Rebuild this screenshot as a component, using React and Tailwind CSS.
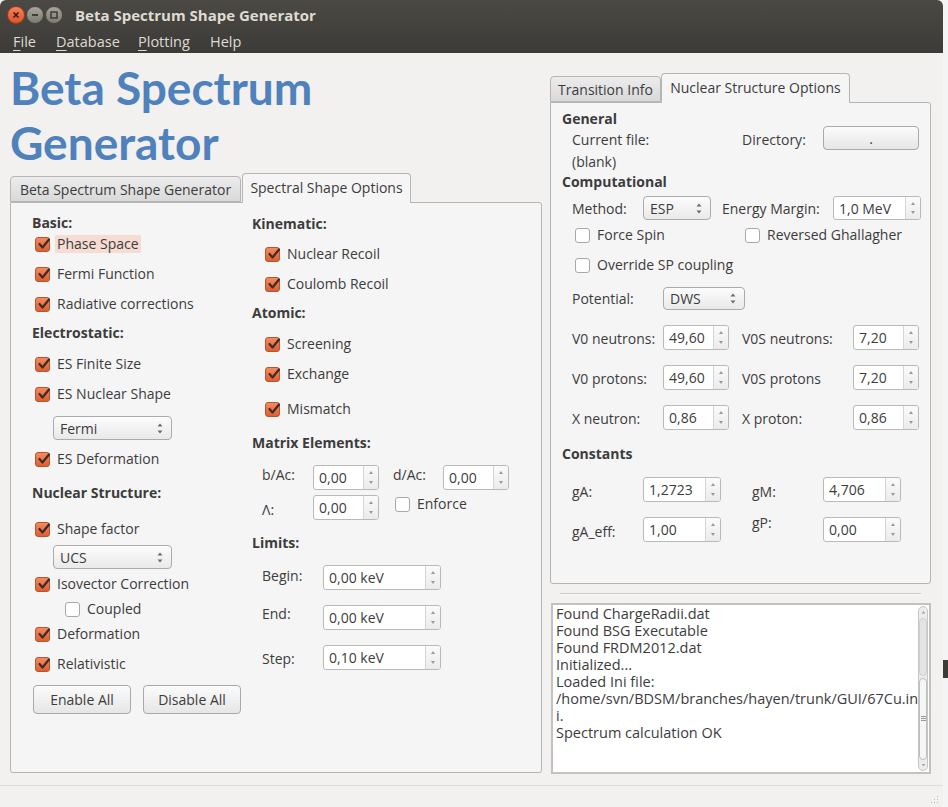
import React from 'react';

const font = { fontFamily: '"Open Sans", "DejaVu Sans", sans-serif' };

const Check = ({ on }) =>
  on ? (
    <span className="relative w-[15px] h-[15px] shrink-0 rounded-[3px] border border-[#b4552f] bg-linear-to-b from-[#f48a5f] to-[#dd5f30]">
      <svg className="absolute left-[1px] top-[-1px]" width="14" height="14" viewBox="0 0 14 14">
        <path d="M2.5 7 L5.5 10.5 L12 2.5" stroke="#3f2b24" strokeWidth="2.2" fill="none" strokeLinecap="round" strokeLinejoin="round" />
      </svg>
    </span>
  ) : (
    <span className="w-[15px] h-[15px] shrink-0 rounded-[3px] border border-[#a9a9a9] bg-white" />
  );

const Cb = ({ on = true, label, hl, className = '' }) => (
  <div className={`flex items-center h-[20px] ${className}`}>
    <Check on={on} />
    <span className={`ml-[5px] px-[2px] leading-[18px] ${hl ? 'bg-[#f6dcd2]' : ''}`}>{label}</span>
  </div>
);

const H = ({ children, className = '' }) => (
  <div className={`h-[20px] flex items-center font-bold text-[#3c3c3c] ${className}`}>{children}</div>
);

const UpDown = ({ color = '#6a6a6a', gap = 3 }) => (
  <svg width="6" height={8 + gap} viewBox={`0 0 6 ${8 + gap}`}>
    <path d="M3 0.5 L5.5 3.5 H0.5 Z" fill={color} />
    <path d={`M3 ${7.5 + gap} L5.5 ${4.5 + gap} H0.5 Z`} fill={color} />
  </svg>
);

const Spin = ({ value, w, h = 'h-[25px]' }) => (
  <div className={`flex ${w} ${h} shrink-0 rounded-[3px] border border-[#b9b9b9] bg-white overflow-hidden`}>
    <div className="flex-1 flex items-center pl-[5px]">{value}</div>
    <div className="w-[15px] border-l border-[#d6d6d6] bg-linear-to-b from-[#fbfbfb] to-[#ebebeb] flex flex-col items-center justify-between py-[5px]">
      <svg width="4" height="3" viewBox="0 0 4 3"><path d="M2 0 L4 3 H0 Z" fill="#9a9a9a" /></svg>
      <svg width="4" height="3" viewBox="0 0 4 3"><path d="M2 3 L4 0 H0 Z" fill="#9a9a9a" /></svg>
    </div>
  </div>
);

const Combo = ({ value, w, h = 'h-[24px]' }) => (
  <div className={`flex items-center justify-between ${w} ${h} shrink-0 rounded-[4px] border border-[#ababab] bg-linear-to-b from-[#fcfcfc] to-[#e9e9e9] pl-[6px] pr-[8px]`}>
    <span>{value}</span>
    <UpDown />
  </div>
);

const Btn = ({ children, w, h }) => (
  <div className={`flex items-center justify-center ${w} ${h} shrink-0 rounded-[4px] border border-[#a9a9a9] bg-linear-to-b from-[#fbfbfb] to-[#e6e6e6]`}>
    {children}
  </div>
);

const WinBtn = ({ kind }) => (
  <span
    className={`w-[18px] h-[18px] rounded-full flex items-center justify-center border ${
      kind === 'close'
        ? 'bg-linear-to-b from-[#f5815a] to-[#e0512a] border-[#9c3a1c]'
        : 'bg-linear-to-b from-[#a8a59d] to-[#7d7a73] border-[#4a4843]'
    }`}
  >
    <svg width="10" height="10" viewBox="0 0 10 10">
      {kind === 'close' && <path d="M2.5 2.5 L7.5 7.5 M7.5 2.5 L2.5 7.5" stroke="#3a1a10" strokeWidth="1.6" />}
      {kind === 'min' && <path d="M2 5 H8" stroke="#38362f" strokeWidth="1.8" />}
      {kind === 'max' && <rect x="2" y="2" width="6" height="6" stroke="#38362f" strokeWidth="1.4" fill="none" />}
    </svg>
  </span>
);

const Menu = ({ u, rest }) => (
  <span>
    <span className={u ? 'underline underline-offset-[3px]' : ''}>{u || ''}</span>
    {rest}
  </span>
);

export default function App() {
  return (
    <div className="flex w-[948px] h-[807px] bg-[#f3f3f3] text-[14px] text-[#3c3c3c] overflow-hidden" style={font}>
      <div className="w-[943px] h-full flex flex-col bg-[#f2f1f0]">
        {/* title bar */}
        <div className="h-[53px] bg-linear-to-b from-[#4a4944] to-[#3c3b37] rounded-t-[6px] flex flex-col text-[#dfdbd2]">
          <div className="h-[30px] flex items-center pl-[7px]">
            <div className="flex items-center gap-[1px]">
              <WinBtn kind="close" />
              <WinBtn kind="min" />
              <WinBtn kind="max" />
            </div>
            <span className="ml-[12px] font-bold text-[15px]">Beta Spectrum Shape Generator</span>
          </div>
          <div className="h-[23px] flex items-center pl-[13px] text-[14.5px]">
            <span className="w-[43px]"><Menu u="F" rest="ile" /></span>
            <span className="w-[82px]"><Menu u="D" rest="atabase" /></span>
            <span className="w-[72px]"><Menu u="P" rest="lotting" /></span>
            <span>Help</span>
          </div>
        </div>

        {/* body */}
        <div className="flex h-[732px]">
          {/* left column */}
          <div className="w-[542px] pl-[10px] flex flex-col">
            <div
              className="pt-[7px] text-[46px] leading-[55px] font-bold text-[#4f81bd]"
              style={{ fontFamily: 'Lato, "DejaVu Sans", sans-serif' }}
            >
              <div>Beta Spectrum</div>
              <div>Generator</div>
            </div>
            <div className="mt-[3px] h-[29px] flex items-end">
              <div className="w-[231px] h-[26px] rounded-t-[4px] border border-[#b5b5b5] bg-linear-to-b from-[#ececec] to-[#d9d9d9] flex items-center justify-center">
                Beta Spectrum Shape Generator
              </div>
              <div className="relative z-10 -mb-px ml-px w-[169px] h-[30px] rounded-t-[4px] border border-b-0 border-[#b5b5b5] bg-[#f5f5f5] flex items-center justify-center pb-[2px]">
                Spectral Shape Options
              </div>
            </div>
            <div className="h-[571px] w-[532px] rounded-b-[3px] rounded-tr-[3px] border border-[#b5b5b5] bg-[#f5f5f5] flex pl-[21px]">
              {/* col 1 */}
              <div className="w-[220px] pt-[9px] flex flex-col">
                <H>Basic:</H>
                <div className="ml-[3px] flex flex-col">
                  <Cb label="Phase Space" hl className="mt-[2px]" />
                  <Cb label="Fermi Function" className="mt-[10px]" />
                  <Cb label="Radiative corrections" className="mt-[10px]" />
                </div>
                <H className="mt-[8px]">Electrostatic:</H>
                <div className="ml-[3px] flex flex-col">
                  <Cb label="ES Finite Size" className="mt-[12px]" />
                  <Cb label="ES Nuclear Shape" className="mt-[10px]" />
                  <div className="mt-[12px] ml-[18px]">
                    <Combo value="Fermi" w="w-[119px]" />
                  </div>
                  <Cb label="ES Deformation" className="mt-[9px]" />
                </div>
                <H className="mt-[13px]">Nuclear Structure:</H>
                <div className="ml-[3px] flex flex-col">
                  <Cb label="Shape factor" className="mt-[17px]" />
                  <div className="mt-[6px] ml-[18px]">
                    <Combo value="UCS" w="w-[119px]" />
                  </div>
                  <Cb label="Isovector Correction" className="mt-[5px]" />
                  <Cb on={false} label="Coupled" className="mt-[5px] ml-[30px]" />
                  <Cb label="Deformation" className="mt-[5px]" />
                  <Cb label="Relativistic" className="mt-[10px]" />
                </div>
                <div className="mt-[11px] ml-[1px] flex gap-[12px]">
                  <Btn w="w-[98px]" h="h-[29px]">Enable All</Btn>
                  <Btn w="w-[98px]" h="h-[29px]">Disable All</Btn>
                </div>
              </div>

              {/* col 2 */}
              <div className="pt-[10px] flex flex-col">
                <H>Kinematic:</H>
                <div className="ml-[13px] flex flex-col">
                  <Cb label="Nuclear Recoil" className="mt-[11px]" />
                  <Cb label="Coulomb Recoil" className="mt-[10px]" />
                </div>
                <H className="mt-[8px]">Atomic:</H>
                <div className="ml-[13px] flex flex-col">
                  <Cb label="Screening" className="mt-[12px]" />
                  <Cb label="Exchange" className="mt-[10px]" />
                  <Cb label="Mismatch" className="mt-[15px]" />
                </div>
                <H className="mt-[13px]">Matrix Elements:</H>
                <div className="ml-[10px] flex flex-col">
                  <div className="mt-[13px] flex items-start">
                    <span className="w-[51px] h-[20px] leading-[20px]">b/Ac:</span>
                    <Spin value="0,00" w="w-[66px]" />
                    <span className="ml-[14px] w-[50px] h-[20px] leading-[20px]">d/Ac:</span>
                    <Spin value="0,00" w="w-[66px]" />
                  </div>
                  <div className="mt-[5px] flex items-start">
                    <span className="w-[51px] h-[20px] leading-[20px] mt-[5px]">Λ:</span>
                    <Spin value="0,00" w="w-[66px]" />
                    <Cb on={false} label="Enforce" className="ml-[16px] -mt-px" />
                  </div>
                </div>
                <H className="mt-[12px]">Limits:</H>
                <div className="ml-[10px] flex flex-col">
                  <div className="mt-[13px] flex items-start">
                    <span className="w-[61px] h-[20px] leading-[20px] mt-[1px]">Begin:</span>
                    <Spin value="0,00 keV" w="w-[118px]" />
                  </div>
                  <div className="mt-[15px] flex items-start">
                    <span className="w-[61px] h-[20px] leading-[20px] -mt-px">End:</span>
                    <Spin value="0,00 keV" w="w-[118px]" />
                  </div>
                  <div className="mt-[15px] flex items-start">
                    <span className="w-[61px] h-[20px] leading-[20px] mt-[4px]">Step:</span>
                    <Spin value="0,10 keV" w="w-[118px]" />
                  </div>
                </div>
              </div>
            </div>
          </div>

          {/* right column */}
          <div className="ml-[8px] w-[381px] pt-[20px] flex flex-col">
            <div className="h-[29px] flex items-end">
              <div className="w-[111px] h-[26px] rounded-t-[4px] border border-[#b5b5b5] bg-linear-to-b from-[#ececec] to-[#d9d9d9] flex items-center justify-center">
                Transition Info
              </div>
              <div className="relative z-10 -mb-px w-[189px] h-[30px] rounded-t-[4px] border border-b-0 border-[#b5b5b5] bg-[#f5f5f5] flex items-center justify-center pb-[2px]">
                Nuclear Structure Options
              </div>
            </div>
            <div className="h-[482px] rounded-b-[3px] rounded-tr-[3px] border border-[#b5b5b5] bg-[#f5f5f5] pl-[11px] pt-[5px] flex flex-col">
              <H>General</H>
              <div className="ml-[10px] flex flex-col">
                <div className="-mt-[2px] flex items-start">
                  <span className="w-[170px] h-[20px] leading-[20px] mt-[4px]">Current file:</span>
                  <span className="w-[81px] h-[20px] leading-[20px] mt-[4px]">Directory:</span>
                  <Btn w="w-[96px]" h="h-[24px]">.</Btn>
                </div>
                <div className="mt-[3px] h-[18px] leading-[18px]">(blank)</div>
              </div>
              <H>Computational</H>
              <div className="ml-[10px] flex flex-col">
                <div className="mt-[5px] flex items-start">
                  <span className="w-[71px] h-[20px] leading-[20px] mt-[3px]">Method:</span>
                  <Combo value="ESP" w="w-[68px]" />
                  <span className="ml-[11px] w-[111px] h-[20px] leading-[20px] mt-[3px]">Energy Margin:</span>
                  <Spin value="1,0 MeV" w="w-[88px]" h="h-[24px]" />
                </div>
                <div className="mt-[5px] flex">
                  <Cb on={false} label="Force Spin" className="ml-[3px] w-[170px]" />
                  <Cb on={false} label="Reversed Ghallagher" />
                </div>
                <Cb on={false} label="Override SP coupling" className="mt-[10px] ml-[3px]" />
                <div className="mt-[12px] flex items-start">
                  <span className="w-[91px] h-[20px] leading-[20px] mt-[2px]">Potential:</span>
                  <Combo value="DWS" w="w-[82px]" h="h-[23px]" />
                </div>
                <div className="mt-[15px] flex items-start">
                  <span className="w-[91px] h-[20px] leading-[20px] mt-[4px]">V0 neutrons:</span>
                  <Spin value="49,60" w="w-[66px]" />
                  <span className="ml-[13px] w-[111px] h-[20px] leading-[20px] mt-[4px]">V0S neutrons:</span>
                  <Spin value="7,20" w="w-[66px]" />
                </div>
                <div className="mt-[15px] flex items-start">
                  <span className="w-[91px] h-[20px] leading-[20px] mt-[4px]">V0 protons:</span>
                  <Spin value="49,60" w="w-[66px]" />
                  <span className="ml-[13px] w-[111px] h-[20px] leading-[20px] mt-[4px]">V0S protons</span>
                  <Spin value="7,20" w="w-[66px]" />
                </div>
                <div className="mt-[15px] flex items-start">
                  <span className="w-[91px] h-[20px] leading-[20px] mt-[4px]">X neutron:</span>
                  <Spin value="0,86" w="w-[66px]" />
                  <span className="ml-[13px] w-[111px] h-[20px] leading-[20px] mt-[4px]">X proton:</span>
                  <Spin value="0,86" w="w-[66px]" />
                </div>
              </div>
              <H className="mt-[13px]">Constants</H>
              <div className="ml-[10px] flex flex-col">
                <div className="mt-[14px] flex items-start">
                  <span className="w-[71px] h-[20px] leading-[20px] mt-[5px]">gA:</span>
                  <Spin value="1,2723" w="w-[78px]" />
                  <span className="ml-[31px] w-[71px] h-[20px] leading-[20px] mt-[5px]">gM:</span>
                  <Spin value="4,706" w="w-[78px]" />
                </div>
                <div className="mt-[15px] flex items-start">
                  <span className="w-[71px] h-[20px] leading-[20px] mt-[5px]">gA_eff:</span>
                  <Spin value="1,00" w="w-[78px]" />
                  <span className="ml-[31px] w-[71px] h-[20px] leading-[20px] -mt-[4px]">gP:</span>
                  <Spin value="0,00" w="w-[78px]" />
                </div>
              </div>
            </div>
            <div className="mt-[9px] ml-[10px] w-[361px] h-[2px] border-t border-[#c8c8c8] border-b border-b-[#fbfbfb]" />
            <div className="mt-[8px] ml-px w-[380px] h-[171px] border-2 border-[#c2c2c2] bg-white flex">
              <div className="flex-1 pl-[3px] text-[14.5px] leading-[17px]">
                <div>Found ChargeRadii.dat</div>
                <div>Found BSG Executable</div>
                <div>Found FRDM2012.dat</div>
                <div>Initialized...</div>
                <div>Loaded Ini file:</div>
                <div>/home/svn/BDSM/branches/hayen/trunk/GUI/67Cu.in</div>
                <div>i.</div>
                <div>Spectrum calculation OK</div>
              </div>
              <div className="w-[12px] my-[1px] mr-[1px] flex flex-col items-center rounded-full border border-[#c6c6c6] bg-[#ececec]">
                <svg className="mt-[4px] mb-[4px]" width="5" height="4" viewBox="0 0 5 4"><path d="M2.5 0 L5 4 H0 Z" fill="#999" /></svg>
                <div className="flex-1 w-full flex flex-col">
                  <div className="h-[58px] rounded-full border border-[#cfcfcf] bg-[#e4e4e4]" />
                  <div className="mt-[2px] h-[82px] rounded-full border border-[#bdbdbd] bg-[#f6f6f6] flex flex-col items-center justify-center gap-[1px]">
                    <span className="w-[5px] h-px bg-[#999]" />
                    <span className="w-[5px] h-px bg-[#999]" />
                    <span className="w-[5px] h-px bg-[#999]" />
                  </div>
                </div>
                <svg className="mt-[4px] mb-[4px]" width="5" height="4" viewBox="0 0 5 4"><path d="M2.5 4 L5 0 H0 Z" fill="#999" /></svg>
              </div>
            </div>
          </div>
        </div>

        {/* status bar */}
        <div className="flex-1 border-t border-[#dcdcdc] bg-[#f2f1f0] flex justify-end items-end pr-[4px] pb-[3px]">
          <svg width="10" height="10" viewBox="0 0 10 10">
            {[[8, 2], [8, 5], [5, 5], [8, 8], [5, 8], [2, 8]].map(([x, y], i) => (
              <rect key={i} x={x} y={y} width="1" height="1" fill="#b8b8b8" />
            ))}
          </svg>
        </div>
      </div>
      <div className="flex-1 flex flex-col bg-[#f4f4f4]">
        <div className="mt-[660px] h-[18px] bg-[#3c3b37]" />
      </div>
    </div>
  );
}
